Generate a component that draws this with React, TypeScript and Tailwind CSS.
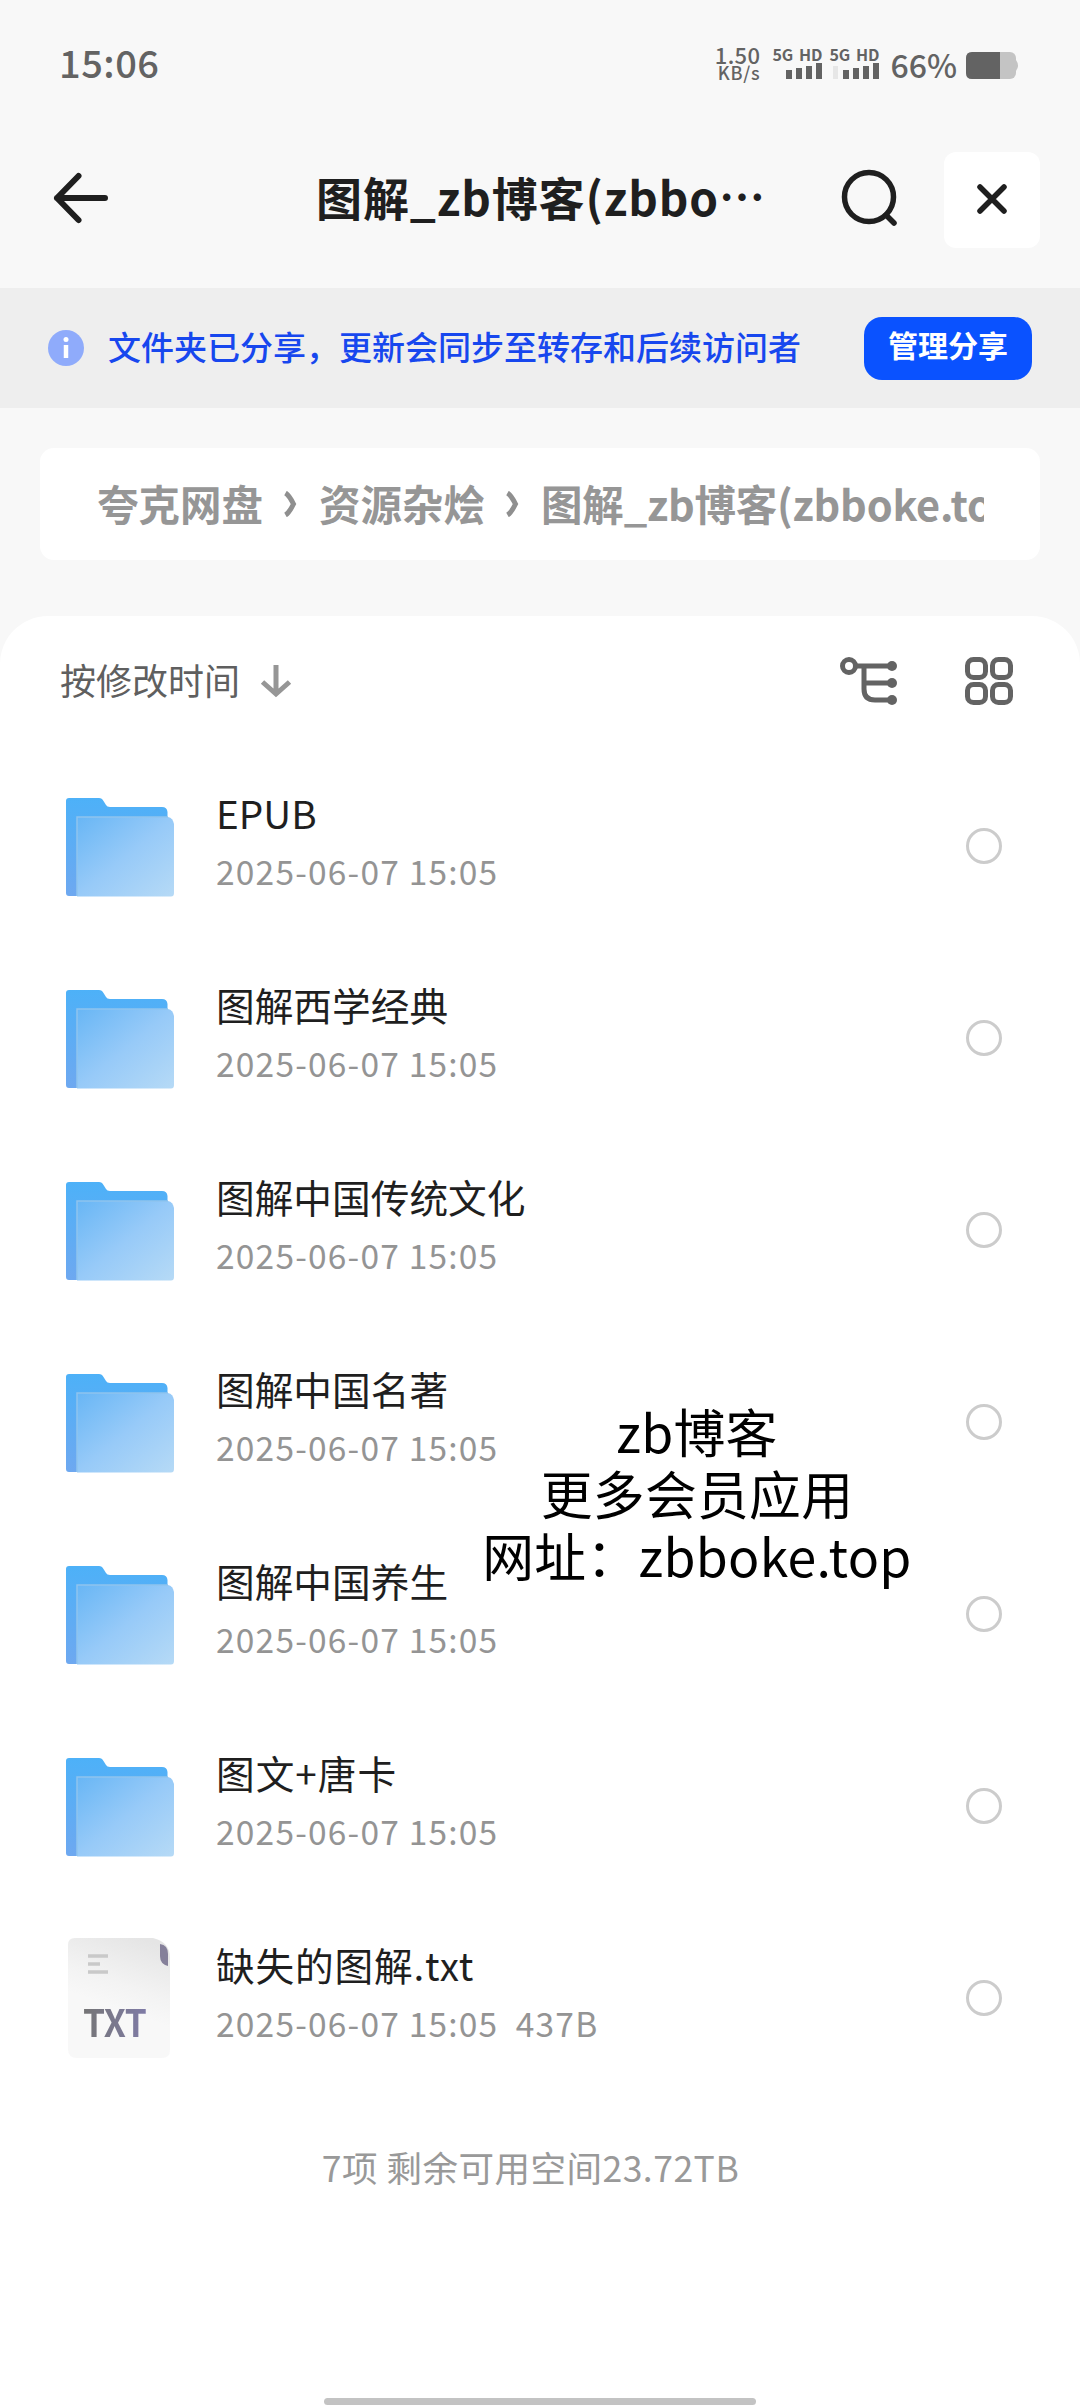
import React from "react";

type Entry = { name: string; meta: string; kind: "folder" | "txt"; tracking?: string };

const entries: Entry[] = [
  { name: "EPUB", meta: "2025-06-07 15:05", kind: "folder" },
  { name: "图解西学经典", meta: "2025-06-07 15:05", kind: "folder" },
  { name: "图解中国传统文化", meta: "2025-06-07 15:05", kind: "folder" },
  { name: "图解中国名著", meta: "2025-06-07 15:05", kind: "folder" },
  { name: "图解中国养生", meta: "2025-06-07 15:05", kind: "folder" },
  { name: "图文+唐卡", meta: "2025-06-07 15:05", kind: "folder", tracking: "tracking-[1px]" },
  { name: "缺失的图解.txt", meta: "2025-06-07 15:05  437B", kind: "txt", tracking: "tracking-[0.8px]" },
];

function FolderIcon() {
  return (
    <svg width="110" height="100" viewBox="0 0 110 100" className="mt-[4px] block">
      <defs>
        <linearGradient id="folder-front" x1="0" y1="0" x2="1" y2="1">
          <stop offset="0" stopColor="#68b6f5" />
          <stop offset="0.5" stopColor="#97caf8" />
          <stop offset="1" stopColor="#b6daf6" />
        </linearGradient>
        <linearGradient id="folder-back" x1="0" y1="0" x2="0" y2="1">
          <stop offset="0" stopColor="#4db1f8" />
          <stop offset="1" stopColor="#6ea8f0" />
        </linearGradient>
      </defs>
      <path
        d="M4 0H34Q37 0 38.500 3L41 7Q42 9 45 9H97Q102 9 102.500 14V98H4Q1 98 1 95V3Q1 0 4 0Z"
        fill="url(#folder-back)"
      />
      <path d="M12 19H103Q108 20 109 26V95Q109 98.500 106 98.500H12Z" fill="url(#folder-front)" />
      <path d="M12 98V19H103" fill="none" stroke="#8fc3ee" strokeWidth="1.500" />
    </svg>
  );
}

function TxtIcon() {
  return (
    <div className="relative h-[124px] w-[110px]">
      <svg width="110" height="124" viewBox="0 0 110 124" className="block">
        <defs>
          <linearGradient id="txt-page" x1="0.7" y1="0" x2="0.4" y2="1">
            <stop offset="0" stopColor="#e5e5e5" />
            <stop offset="0.4" stopColor="#f3f3f3" />
            <stop offset="0.6" stopColor="#f8f8f8" />
            <stop offset="1" stopColor="#f8f8f8" />
          </linearGradient>
        </defs>
        <path d="M10 2H88Q105 6 105 22V114Q105 122 97 122H12Q3 122 3 113V9Q3 2 10 2Z" fill="url(#txt-page)" />
        <path d="M95 8Q103 9 103 18V30Q95 28 95 20Z" fill="#85809a" />
        <path d="M23 20H43M23 28H35M23 36H43" stroke="#c9c9c9" strokeWidth="3.500" />
      </svg>
      <span className="absolute top-[65px] left-[18px] origin-left scale-x-[0.93] bg-linear-to-r from-[#757575] to-[#7f7ba6] bg-clip-text text-[38px] leading-[40px] font-bold tracking-[-0.5px] text-transparent">
        TXT
      </span>
    </div>
  );
}

function Signal({ ghost }: { ghost?: boolean }) {
  return (
    <div className="flex w-[48px] flex-col items-end">
      <span className="text-[16px] leading-[17px] font-bold whitespace-nowrap [word-spacing:2px]">5G HD</span>
      <div className="flex h-[16px] items-end gap-[4px]">
        {ghost && <i className="mr-px h-[13px] w-[5px] bg-[#e6e6e6]" />}
        <i className="h-[9px] w-[6px] bg-[#636363]" />
        <i className="h-[11px] w-[6px] bg-[#636363]" />
        <i className="h-[13px] w-[6px] bg-[#636363]" />
        <i className="h-[16px] w-[6px] bg-[#636363]" />
      </div>
    </div>
  );
}

function StatusBar() {
  return (
    <div className="flex h-[128px] items-center justify-between pr-[60px] pl-[59px] text-[#636363]">
      <span className="pb-[4px] text-[38px] leading-[56px] font-medium tracking-[0.5px]">15:06</span>
      <div className="flex items-center">
        <div className="mr-[14px] flex flex-col items-end pb-[3px] font-medium">
          <span className="text-[22px] leading-[18px] tracking-[0.4px]">1.50</span>
          <span className="text-[18px] leading-[18px] tracking-[0.8px]">KB/s</span>
        </div>
        <div className="flex gap-[9px] pb-[3px]">
          <Signal />
          <Signal ghost />
        </div>
        <span className="ml-[11px] text-[32px] leading-[40px] font-medium">66%</span>
        <svg width="54" height="28" viewBox="0 0 54 28" className="mt-[3px] ml-[9px]">
          <rect x="0" y="0" width="50" height="27" rx="6" fill="#c4c4c4" />
          <path d="M50 8Q54 13.500 50 19Z" fill="#c4c4c4" />
          <path d="M6 0H34V27H6Q0 27 0 21V6Q0 0 6 0Z" fill="#636363" />
        </svg>
      </div>
    </div>
  );
}

function Header() {
  return (
    <header className="flex h-[160px] items-center pr-[40px] pb-[16px] pl-[52px]">
      <svg width="60" height="60" viewBox="0 0 60 60" fill="none" stroke="#1f1f1f" strokeWidth="6" strokeLinecap="round" strokeLinejoin="round" className="mb-[4px]">
        <path d="M26.500 8L5 30L26.500 52M5 30H53" />
      </svg>
      <h1 className="ml-[204px] w-[500px] pb-[9px] text-[46px] leading-[60px] font-bold tracking-[0.900px] whitespace-nowrap text-[#1f1f1f]">
        图解_zb博客(zbbo
        <span className="inline-block -translate-y-[2px]">…</span>
      </h1>
      <svg width="60" height="60" viewBox="0 0 60 60" fill="none" stroke="#1f1f1f" strokeWidth="5.500" strokeLinecap="round" className="mb-[2px] ml-[24px]">
        <circle cx="29" cy="28" r="24.500" />
        <path d="M46 46L54 54" />
      </svg>
      <div className="ml-auto flex size-[96px] items-center justify-center rounded-[12px] bg-white pb-[3px]">
        <svg width="32" height="32" viewBox="0 0 32 32" stroke="#1f1f1f" strokeWidth="5.500" strokeLinecap="round">
          <path d="M4 4L28 28M28 4L4 28" />
        </svg>
      </div>
    </header>
  );
}

function ShareBanner() {
  return (
    <div className="flex h-[120px] items-center bg-[#eeeeee] px-[48px]">
      <svg width="36" height="36" viewBox="0 0 36 36">
        <circle cx="18" cy="18" r="18" fill="#8fabfb" />
        <circle cx="18" cy="9.500" r="2.500" fill="#fff" />
        <path d="M18 15V28" stroke="#fff" strokeWidth="4.500" />
      </svg>
      <span className="ml-[24px] pb-[4px] text-[33px] leading-[48px] font-medium whitespace-nowrap text-[#1747ee]">
        文件夹已分享，更新会同步至转存和后续访问者
      </span>
      <button className="ml-auto h-[63px] w-[168px] rounded-[18px] bg-[#0a52ff] pb-[8px] text-[30px] leading-[55px] font-bold text-white">
        管理分享
      </button>
    </div>
  );
}

function Chevron() {
  return (
    <svg width="14" height="26" viewBox="0 0 14 26" fill="none" stroke="#8f8f8f" strokeWidth="5" className="mr-[22px] ml-[20px] shrink-0">
      <path d="M2.500 2Q6 4 10.500 13Q6 22 2.500 24" />
    </svg>
  );
}

function Breadcrumb() {
  return (
    <nav className="mx-[40px] mt-[40px] h-[112px] rounded-[14px] bg-white pr-[56px] pl-[57px]">
      <div className="flex h-full items-center overflow-hidden text-[41.500px] leading-[60px] font-bold whitespace-nowrap text-[#969696]">
        <span className="pb-[3px]">夸克网盘</span>
        <Chevron />
        <span className="pb-[3px]">资源杂烩</span>
        <Chevron />
        <span className="pb-[3px] tracking-[-0.200px]">图解_zb博客(zbboke.top)</span>
      </div>
    </nav>
  );
}

function SortBar() {
  return (
    <div className="flex h-[130px] items-center pr-[66px] pl-[60px]">
      <span className="pb-[4px] text-[36px] leading-[48px] text-[#5f5f5f]">按修改时间</span>
      <svg width="32" height="34" viewBox="0 0 32 34" fill="none" stroke="#969696" strokeWidth="5" className="ml-[20px]">
        <path d="M16 1V29M2.500 18L16 30L29.500 18" />
      </svg>
      <svg width="60" height="50" viewBox="0 0 60 50" fill="none" stroke="#636363" strokeWidth="5" className="ml-auto">
        <circle cx="10" cy="10" r="6.500" />
        <path d="M17 10H53M25 10V33Q25 44 36 44H53M25 27H53" />
        <g fill="#636363" stroke="none">
          <circle cx="53" cy="10" r="5" />
          <circle cx="53" cy="27" r="5" />
          <circle cx="53" cy="44" r="5" />
        </g>
      </svg>
      <svg width="50" height="50" viewBox="0 0 50 50" fill="none" stroke="#636363" strokeWidth="5" className="ml-[65px]">
        <rect x="3.500" y="3.500" width="18" height="18" rx="6" />
        <rect x="28.500" y="3.500" width="18" height="18" rx="6" />
        <rect x="3.500" y="28.500" width="18" height="18" rx="6" />
        <rect x="28.500" y="28.500" width="18" height="18" rx="6" />
      </svg>
    </div>
  );
}

function Row({ entry }: { entry: Entry }) {
  return (
    <li className="flex h-[192px] items-center pr-[78px] pl-[65px]">
      {entry.kind === "folder" ? <FolderIcon /> : <TxtIcon />}
      <div className="ml-[41px] flex flex-col pb-[10px]">
        <span className={`text-[38.700px] leading-[56px] text-[#1f1f1f] ${entry.tracking ?? ""}`}>{entry.name}</span>
        <span className="mt-[3px] text-[33.500px] leading-[56px] tracking-[1.200px] whitespace-pre text-[#949494]">{entry.meta}</span>
      </div>
      <span className="ml-auto size-[36px] rounded-full border-[3px] border-[#cccccc]" />
    </li>
  );
}

export default function App() {
  return (
    <div className="relative flex h-[2408px] w-[1080px] flex-col overflow-hidden bg-[#f8f8f8] font-['Noto_Sans_CJK_SC',sans-serif]">
      <StatusBar />
      <Header />
      <ShareBanner />
      <Breadcrumb />
      <main className="mt-[56px] flex flex-1 flex-col rounded-t-[48px] bg-white">
        <SortBar />
        <ul className="mt-[4px]">
          {entries.map((entry) => (
            <Row key={entry.name} entry={entry} />
          ))}
        </ul>
        <p className="mt-[45px] mr-[19px] text-center text-[35.500px] leading-[56px] tracking-[0.500px] text-[#999999]">
          7项 剩余可用空间23.72TB
        </p>
        <div className="mx-auto mt-auto mb-[3px] h-[7px] w-[432px] rounded-full bg-[#c3c3c3]" />
      </main>
      <div className="absolute top-[1400px] left-[447px] w-[500px] text-center text-[51.800px] leading-[62px] tracking-[0.300px] whitespace-nowrap text-black">
        <p>zb博客</p>
        <p>更多会员应用</p>
        <p>网址：zbboke.top</p>
      </div>
    </div>
  );
}
